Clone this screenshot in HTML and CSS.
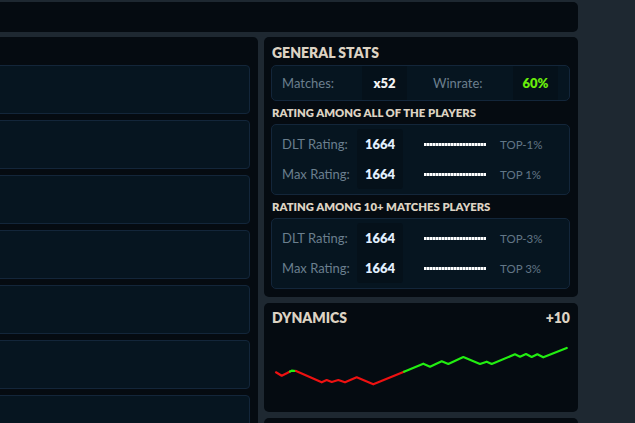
FILE: index.html
```html
<!DOCTYPE html>
<html>
<head>
<meta charset="utf-8">
<link rel="stylesheet" href="styles.css">
</head>
<body>
<div class="page">
  <div class="topbar"></div>
  <div class="main">
    <div class="left">
      <div class="card"></div>
      <div class="card"></div>
      <div class="card"></div>
      <div class="card"></div>
      <div class="card"></div>
      <div class="card"></div>
      <div class="card"></div>
    </div>
    <div class="right">
      <section class="panel stats">
        <h2 class="title">GENERAL STATS</h2>
        <div class="box general">
          <span class="label">Matches:</span>
          <span class="cell val">x52</span>
          <span class="label wr">Winrate:</span>
          <span class="cell green">60%</span>
        </div>
        <h3 class="sub">RATING AMONG ALL OF THE PLAYERS</h3>
        <div class="box rating">
          <span class="label">DLT Rating:</span>
          <span class="cell num top">1664</span>
          <span class="bar"></span>
          <span class="rank">TOP-1%</span>
          <span class="label">Max Rating:</span>
          <span class="cell num bottom">1664</span>
          <span class="bar"></span>
          <span class="rank">TOP 1%</span>
        </div>
        <h3 class="sub">RATING AMONG 10+ MATCHES PLAYERS</h3>
        <div class="box rating">
          <span class="label">DLT Rating:</span>
          <span class="cell num top">1664</span>
          <span class="bar"></span>
          <span class="rank">TOP-3%</span>
          <span class="label">Max Rating:</span>
          <span class="cell num bottom">1664</span>
          <span class="bar"></span>
          <span class="rank">TOP 3%</span>
        </div>
      </section>
      <section class="panel dynamics">
        <div class="dyn-head">
          <h2 class="title">DYNAMICS</h2>
          <span class="delta">+10</span>
        </div>
        <svg class="chart" width="300" height="50" viewBox="0 0 300 50">
          <g fill="none" stroke-width="2.2" stroke-linejoin="round" stroke-linecap="round">
            <polyline stroke="#ee1111" points="4,32.3 9.7,35.7 14.7,33.3 18,31.5"/>
            <polyline stroke="#22ee11" points="18,31.5 19.7,30.7 24,31"/>
            <polyline stroke="#ee1111" points="24,31 49.7,42.3 54.7,40 59.7,42 66.3,40 73,42.3 84.7,37.3 101.3,44.3 132,31.7"/>
            <polyline stroke="#22ee11" points="132,31.7 151.3,23.7 158,26.7 169.7,21.3 176.3,24 191.3,17 208,24 214.7,21.7 219.7,24 243,14.3 248,16.7 254,14 259.7,17 265.3,14.3 271.3,17.3 294.7,8"/>
          </g>
        </svg>
      </section>
      <section class="panel extra"></section>
    </div>
  </div>
</div>
</body>
</html>
```
FILE: styles.css
```css
* { box-sizing: border-box; }
html, body {
  margin: 0;
  padding: 0;
  background: #1e2831;
  overflow: hidden;
  height: 423px;
}
body {
  font-family: Lato, "Open Sans", sans-serif;
}
.page {
  margin-left: -300px;
  width: 878px;
  padding-top: 2px;
  display: flex;
  flex-direction: column;
  gap: 5px;
}
.topbar {
  height: 30px;
  background: #050b11;
  border-radius: 5px;
}
.main {
  display: flex;
  gap: 6px;
  align-items: flex-start;
}
.left {
  flex: 1;
  background: #050b11;
  border-radius: 5px 5px 0 0;
  padding: 28px 8px 0 20px;
  display: flex;
  flex-direction: column;
  gap: 6px;
  height: 386px;
  overflow: hidden;
}
.card {
  height: 49px;
  flex: none;
  background: #061520;
  border: 1px solid #13263a;
  border-radius: 4px;
}
.right {
  width: 314px;
  display: flex;
  flex-direction: column;
  gap: 6px;
}
.panel {
  background: #050b11;
  border-radius: 5px;
}
.stats {
  height: 260px;
  padding: 6px 8px 0 7px;
}
.title {
  margin: 0;
  font-size: 14px;
  line-height: 20px;
  font-weight: 800;
  color: #ddd3c3;
  padding-left: 1px;
}
.stats .title { margin-bottom: 2px; }
.sub {
  margin: 4px 0 3px;
  font-size: 11.3px;
  line-height: 16px;
  font-weight: 800;
  color: #ddd3c3;
  padding-left: 1px;
}
.box {
  background: #061520;
  border: 1px solid #13263a;
  border-radius: 5px;
}
.general {
  height: 36px;
  display: grid;
  grid-template-columns: 80px 45px 106px 45px;
  padding-left: 10px;
  align-items: stretch;
}
.general > span {
  display: flex;
  align-items: center;
}
.label {
  font-size: 13px;
  color: #6b7f8e;
}
.general .wr { padding-left: 26px; }
.cell {
  justify-content: center;
  font-weight: 800;
  font-size: 13px;
  background: #05111a;
}
.val { color: #f4f4f4; }
.green { color: #6aee0a; }
.rating {
  height: 71px;
  display: grid;
  grid-template-columns: 75px 46px 83px auto;
  grid-template-rows: 30px 30px;
  padding: 4px 0 0 10px;
  align-items: stretch;
}
.rating > span {
  display: flex;
  align-items: center;
}
.num { color: #e2f0ff; }
.num.top { border-radius: 3px 3px 0 0; }
.num.bottom { border-radius: 0 0 3px 3px; }
.rating .bar {
  display: block;
  align-self: center;
  margin-left: 21px;
  width: 62px;
  height: 3px;
  background: repeating-linear-gradient(90deg, #ffffff 0 2px, #9aa3aa 2px 3px);
}
.rating .rank {
  margin-left: 14px;
  font-size: 11.5px;
  color: #627686;
}
.dynamics {
  height: 109px;
  padding: 5px 8px 0 7px;
}
.dyn-head {
  display: flex;
  justify-content: space-between;
  align-items: center;
}
.delta {
  font-size: 14px;
  font-weight: 800;
  line-height: 20px;
  color: #ddd3c3;
}
.chart {
  display: block;
  margin-top: 12px;
  margin-left: 1px;
}
.extra {
  height: 5px;
  border-radius: 5px 5px 0 0;
}
```
